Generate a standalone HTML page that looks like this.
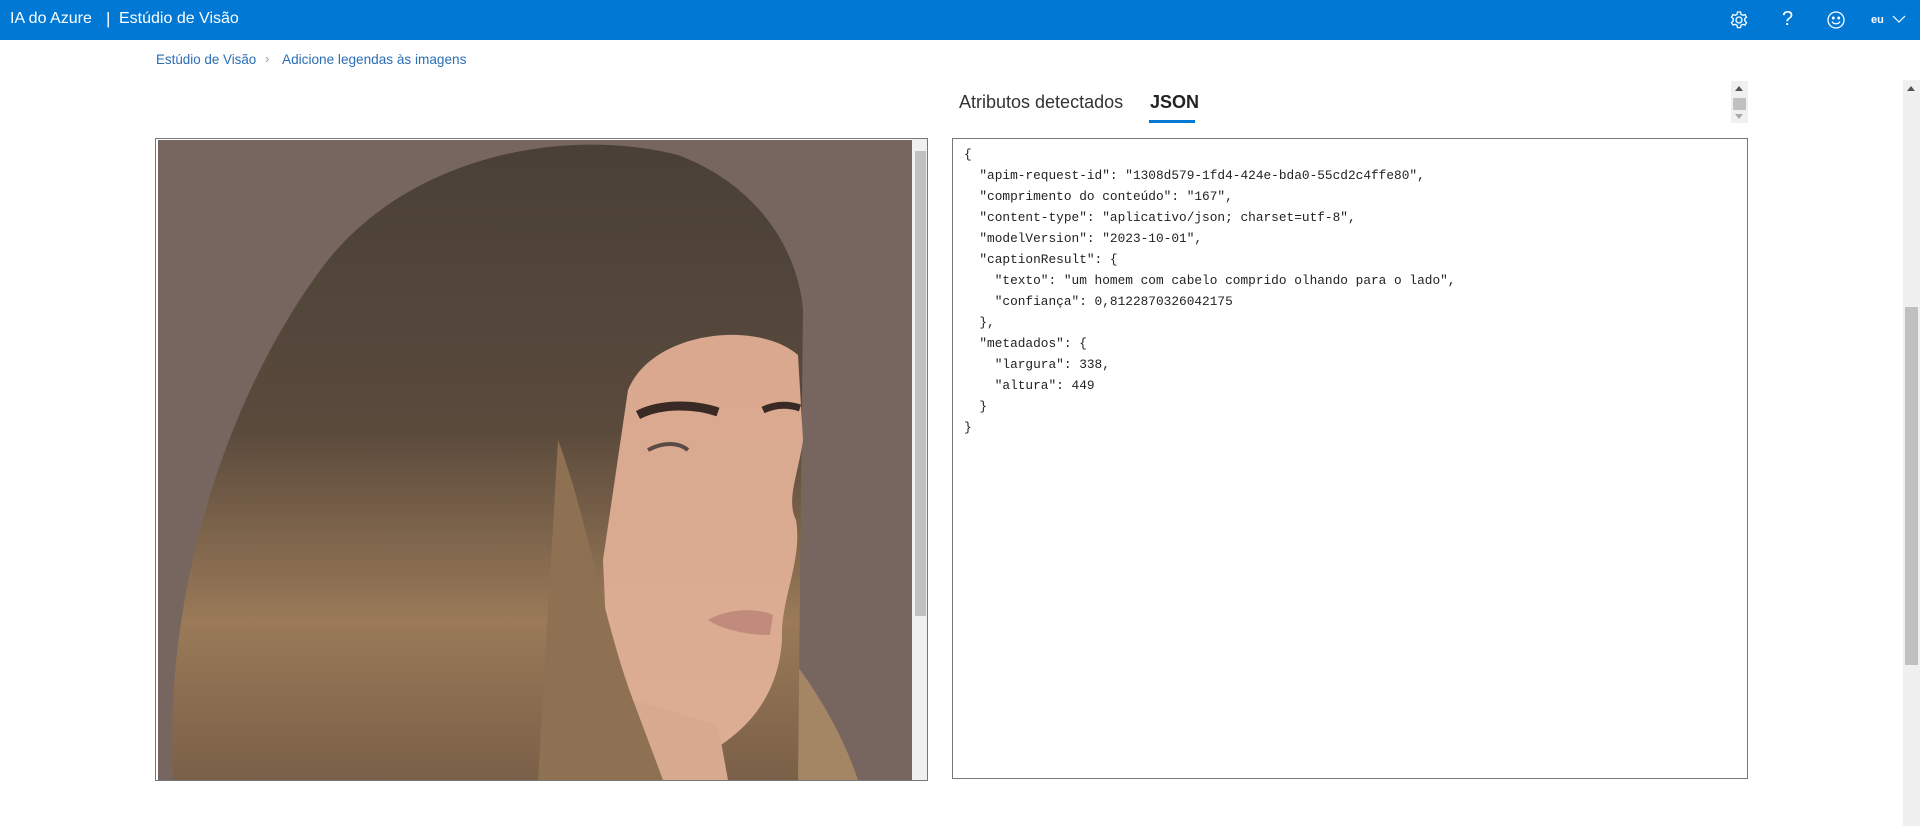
<!DOCTYPE html>
<html><head><meta charset="utf-8"><style>
*{margin:0;padding:0;box-sizing:border-box}
body{width:1920px;height:826px;overflow:hidden;background:#fff;font-family:"Liberation Sans",sans-serif;position:relative}
.hdr{position:absolute;left:0;top:0;width:1920px;height:40px;background:#0078d4;color:#fff}
.abs{position:absolute}
pre{font-family:"Liberation Mono",monospace;font-size:12.8px;line-height:21px;color:#222}
</style></head><body>
<div class="hdr">
<div class="abs" style="left:10px;top:10px;font-size:16px">IA do Azure</div>
<div class="abs" style="left:106px;top:9px;font-size:17px">|</div>
<div class="abs" style="left:119px;top:10px;font-size:16px">Estúdio de Visão</div>
<svg class="abs" style="left:1729px;top:10px" width="20" height="20" viewBox="0 0 20 20" fill="none" stroke="#fff" stroke-width="1.3"><circle cx="10" cy="10" r="3"/><path d="M8.5 2h3l.5 2.3 1.8 1 2.2-.8 1.5 2.6-1.7 1.6v2.2l1.7 1.6-1.5 2.6-2.2-.8-1.8 1-.5 2.3h-3l-.5-2.3-1.8-1-2.2.8-1.5-2.6 1.7-1.6V8.7L2.5 7.1 4 4.5l2.2.8 1.8-1z"/></svg>
<div class="abs" style="left:1782px;top:8px;font-size:20px">?</div>
<svg class="abs" style="left:1826px;top:10px" width="20" height="20" viewBox="0 0 20 20" fill="none" stroke="#fff" stroke-width="1.3"><circle cx="10" cy="10" r="8"/><circle cx="7.3" cy="8" r=".8" fill="#fff"/><circle cx="12.7" cy="8" r=".8" fill="#fff"/><path d="M6 11.5c1.5 3 6.5 3 8 0"/></svg>
<div class="abs" style="left:1871px;top:14px;font-size:11px;font-weight:bold">eu</div>
<svg class="abs" style="left:1892px;top:15px" width="14" height="9" viewBox="0 0 14 9" fill="none" stroke="#fff" stroke-width="1.2"><path d="M1 1l6 6 6-6"/></svg>
</div>
<div class="abs" style="left:156px;top:52px;font-size:13.4px;color:#2a6db5">Estúdio de Visão</div>
<div class="abs" style="left:265px;top:51px;font-size:13px;color:#999">›</div>
<div class="abs" style="left:282px;top:52px;font-size:13.6px;color:#2a6db5">Adicione legendas às imagens</div>
<div class="abs" style="left:959px;top:92px;font-size:18px;color:#333">Atributos detectados</div>
<div class="abs" style="left:1150px;top:92px;font-size:18px;color:#222;font-weight:bold">JSON</div>
<div class="abs" style="left:1149px;top:120px;width:46px;height:3px;background:#0078d4"></div>
<div class="abs" style="left:1731px;top:81px;width:17px;height:42px;background:#f0f0f0"></div>
<div class="abs" style="left:1735px;top:86px;border:4px solid transparent;border-bottom:5px solid #555;border-top:0"></div>
<div class="abs" style="left:1733px;top:98px;width:13px;height:12px;background:#c0c0c0"></div>
<div class="abs" style="left:1735px;top:114px;border:4px solid transparent;border-top:5px solid #aaa;border-bottom:0"></div>
<div class="abs" style="left:1903px;top:80px;width:17px;height:746px;background:#f0f0f0"></div>
<div class="abs" style="left:1907px;top:86px;border:4px solid transparent;border-bottom:5px solid #555;border-top:0"></div>
<div class="abs" style="left:1905px;top:307px;width:13px;height:358px;background:#c0c0c0"></div>

<div class="abs" style="left:155px;top:138px;width:773px;height:643px;border:1px solid #777;overflow:hidden">
<svg class="abs" style="left:2px;top:1px" width="754" height="640" viewBox="0 0 754 640">
<defs><linearGradient id="h" x1="0" y1="0" x2="0" y2="1"><stop offset="0" stop-color="#4a4038"/><stop offset=".45" stop-color="#5a4a3c"/><stop offset=".75" stop-color="#9a7a58"/><stop offset="1" stop-color="#7a6048"/></linearGradient>
<linearGradient id="s" x1="0" y1="0" x2="0" y2="1"><stop offset="0" stop-color="#d9a88e"/><stop offset="1" stop-color="#dcae94"/></linearGradient></defs>
<rect width="754" height="640" fill="#77655f"/>
<path d="M600 480 C640 520 680 580 700 640 L560 640 Z" fill="#a48664"/>
<path d="M15 640 C5 450 70 250 170 120 C250 20 400 -15 520 15 C600 45 640 110 645 170 L640 640 Z" fill="url(#h)"/>
<path d="M470 250 C495 190 600 180 640 215 L645 300 C640 335 628 360 638 380 C645 420 622 460 624 500 C620 560 585 600 525 625 L455 640 L445 420 Z" fill="url(#s)"/>
<path d="M390 640 L425 545 L560 585 L570 640 Z" fill="#d7a98f"/>
<path d="M400 300 C430 380 445 480 475 560 L505 640 L380 640 Z" fill="#8e7052"/>
<path d="M480 275 C505 262 540 265 560 272" stroke="#3a2a25" stroke-width="9" fill="none"/>
<path d="M605 270 C618 264 630 264 642 268" stroke="#3a2a25" stroke-width="7" fill="none"/>
<path d="M490 310 C505 302 520 302 530 310" stroke="#5a4a45" stroke-width="4" fill="none"/>
<path d="M550 480 C570 468 600 468 615 475 L612 495 C590 495 565 490 550 480Z" fill="#c08a7c"/>
</svg>
<div class="abs" style="left:756px;top:0;width:16px;height:641px;background:#f0f0f0"></div>
<div class="abs" style="left:759px;top:12px;width:11px;height:465px;background:#c0c0c0"></div>
</div>

<div class="abs" style="left:952px;top:138px;width:796px;height:641px;border:1px solid #777">
<pre class="abs" style="left:11px;top:5px">{
  "apim-request-id": "1308d579-1fd4-424e-bda0-55cd2c4ffe80",
  "comprimento do conteúdo": "167",
  "content-type": "aplicativo/json; charset=utf-8",
  "modelVersion": "2023-10-01",
  "captionResult": {
    "texto": "um homem com cabelo comprido olhando para o lado",
    "confiança": 0,8122870326042175
  },
  "metadados": {
    "largura": 338,
    "altura": 449
  }
}</pre>
</div>
</body></html>
